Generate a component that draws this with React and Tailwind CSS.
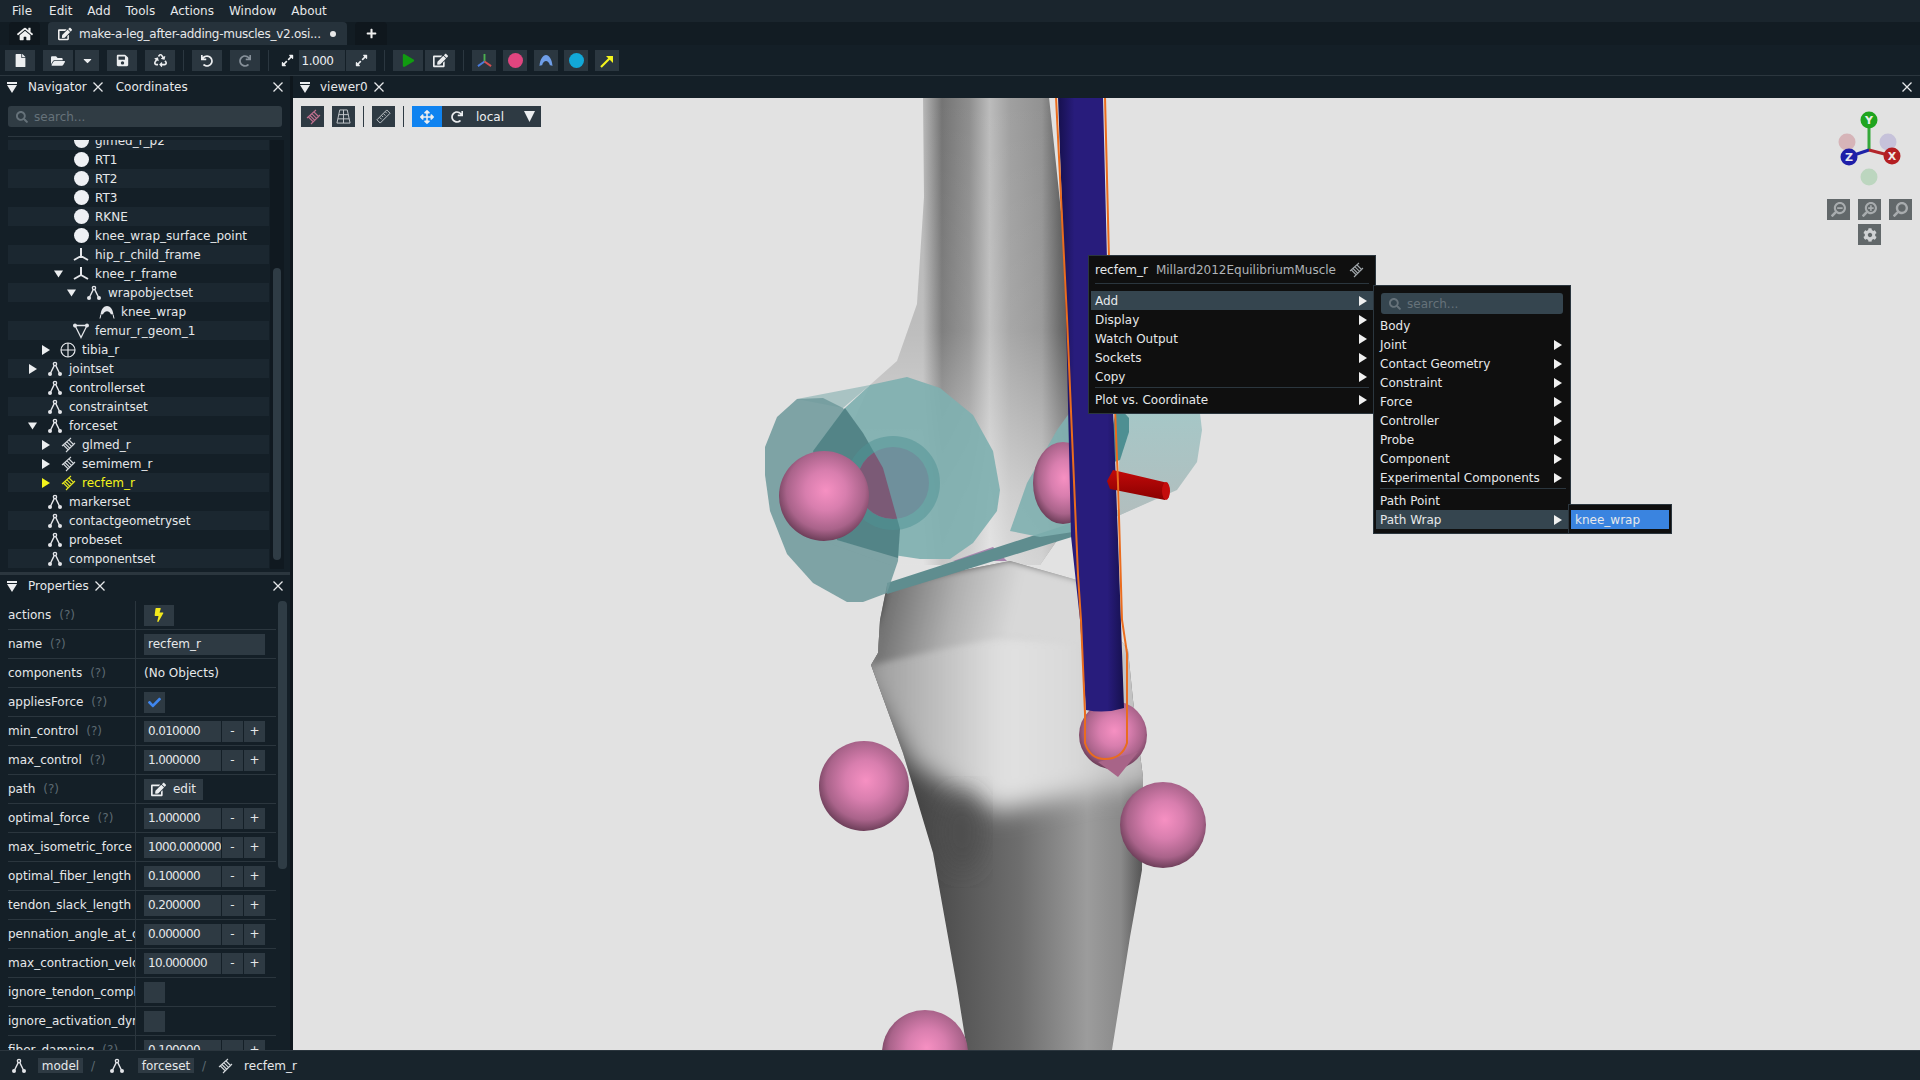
import React from 'react';
import {
  FaHome, FaEdit, FaPlus, FaFile, FaFolderOpen, FaCaretDown, FaSave, FaRecycle, FaUndo, FaRedo,
  FaExpandAlt, FaPlay, FaSearch, FaBolt, FaCheck, FaCog, FaSearchPlus, FaSearchMinus, FaArrowsAlt,
} from 'react-icons/fa';

// OpenSim style icons that the icon packs don't have
function SetIcon({ className = 'text-[#e4e6ea]' }) {
  return (
    <svg viewBox="0 0 16 16" className={`w-[16px] h-[16px] ${className}`} fill="none" stroke="currentColor" strokeWidth="1.4">
      <circle cx="8" cy="3" r="1.6" />
      <path d="M7.2 4.6 3.6 12M8.8 4.6l3.6 7.4" />
      <circle cx="3" cy="13" r="2" fill="currentColor" stroke="none" />
      <circle cx="13" cy="13" r="2" fill="currentColor" stroke="none" />
    </svg>
  );
}

function FrameIcon({ className = 'text-[#e4e6ea]' }) {
  return (
    <svg viewBox="0 0 16 16" className={`w-[16px] h-[16px] ${className}`} fill="none" stroke="currentColor" strokeWidth="2">
      <path d="M8 1v8M8 9l-7 4M8 9l7 4" />
    </svg>
  );
}

function MuscleIcon({ className = 'text-[#d4d8dc]' }) {
  return (
    <svg viewBox="0 0 16 16" className={`w-[16px] h-[16px] ${className}`} fill="none" stroke="currentColor" strokeWidth="1.1">
      <path d="M2 9 11 1M6 15l9-9M5 6.500l5 5M7 4.800l5 5M3.400 8l5 5M9 3l5 5" />
    </svg>
  );
}

function WrapIcon() {
  return (
    <svg viewBox="0 0 16 16" className="w-[16px] h-[16px] text-[#e4e6ea]" fill="currentColor">
      <path d="M1.500 11C2 5 5 2 8 2s6 3 6.500 9c-1-.6-1.800-.8-2.500-.6C11 8 9.500 7.200 8 7.200S5 8 3.900 10.400C3.200 10.200 2.500 10.400 1.500 11z" />
      <path d="M1.800 11 1 14.500M14.200 11l.8 3.500" stroke="currentColor" strokeWidth="1" />
    </svg>
  );
}

function MeshIcon() {
  return (
    <svg viewBox="0 0 16 16" className="w-[16px] h-[16px] text-[#e4e6ea]" fill="none" stroke="currentColor" strokeWidth="1.300">
      <path d="M2 2.500h12L8 14.500z" />
      <circle cx="2" cy="2.500" r="1.300" fill="currentColor" />
      <circle cx="14" cy="2.500" r="1.300" fill="currentColor" />
    </svg>
  );
}

function BodyIcon() {
  return (
    <svg viewBox="0 0 16 16" className="w-[16px] h-[16px] text-[#e4e6ea]" fill="none" stroke="currentColor" strokeWidth="1.200">
      <circle cx="8" cy="8" r="7" />
      <path d="M1 8h14M8 1v14" />
    </svg>
  );
}

function StationIcon() {
  return <div className="w-[15px] h-[15px] rounded-full bg-[#eef0f4]" />;
}

function CloseX({ className = '' }) {
  return (
    <svg viewBox="0 0 10 10" className={`w-[10px] h-[10px] text-[#e6e8ea] ${className}`} fill="none" stroke="currentColor" strokeWidth="1.300">
      <path d="M.5.5l9 9M9.500.5l-9 9" />
    </svg>
  );
}

function TriRight({ className = 'text-[#eceef0]' }) {
  return (
    <svg viewBox="0 0 8 10" className={`w-[8px] h-[10px] ${className}`} fill="currentColor">
      <path d="M0 0l8 5-8 5z" />
    </svg>
  );
}

function TriDown({ className = 'text-[#eceef0]' }) {
  return (
    <svg viewBox="0 0 10 8" className={`w-[9px] h-[8px] ${className}`} fill="currentColor">
      <path d="M0 0h10L5 8z" />
    </svg>
  );
}

function PanelMenuIcon() {
  return (
    <svg viewBox="0 0 10 11" className="w-[10px] h-[11px] text-[#eceef0]" fill="currentColor">
      <path d="M0 0h10v2H0zM0 3h10L5 11z" />
    </svg>
  );
}

const treeRows = [
  { label: 'glmed_r_p2', level: 2, icon: 'station' },
  { label: 'RT1', level: 2, icon: 'station' },
  { label: 'RT2', level: 2, icon: 'station' },
  { label: 'RT3', level: 2, icon: 'station' },
  { label: 'RKNE', level: 2, icon: 'station' },
  { label: 'knee_wrap_surface_point', level: 2, icon: 'station' },
  { label: 'hip_r_child_frame', level: 2, icon: 'frame' },
  { label: 'knee_r_frame', level: 2, icon: 'frame', arrow: 'down' },
  { label: 'wrapobjectset', level: 3, icon: 'set', arrow: 'down' },
  { label: 'knee_wrap', level: 4, icon: 'wrap' },
  { label: 'femur_r_geom_1', level: 2, icon: 'mesh' },
  { label: 'tibia_r', level: 1, icon: 'body', arrow: 'right' },
  { label: 'jointset', level: 0, icon: 'set', arrow: 'right' },
  { label: 'controllerset', level: 0, icon: 'set' },
  { label: 'constraintset', level: 0, icon: 'set' },
  { label: 'forceset', level: 0, icon: 'set', arrow: 'down' },
  { label: 'glmed_r', level: 1, icon: 'muscle', arrow: 'right' },
  { label: 'semimem_r', level: 1, icon: 'muscle', arrow: 'right' },
  { label: 'recfem_r', level: 1, icon: 'muscle', arrow: 'right', selected: true },
  { label: 'markerset', level: 0, icon: 'set' },
  { label: 'contactgeometryset', level: 0, icon: 'set' },
  { label: 'probeset', level: 0, icon: 'set' },
  { label: 'componentset', level: 0, icon: 'set' },
];

function TreeIcon({ kind, selected }) {
  if (kind === 'station') return <StationIcon />;
  if (kind === 'frame') return <FrameIcon />;
  if (kind === 'set') return <SetIcon />;
  if (kind === 'wrap') return <WrapIcon />;
  if (kind === 'mesh') return <MeshIcon />;
  if (kind === 'body') return <BodyIcon />;
  return <MuscleIcon className={selected ? 'text-[#e6e61e]' : 'text-[#d4d8dc]'} />;
}

function TreeRow({ row, index }) {
  const color = row.selected ? 'text-[#f4f41c]' : 'text-[#e6e8ea]';
  return (
    <div
      className={`h-[19px] flex items-center ${index % 2 === 0 ? 'bg-[#1b2730]' : ''} ${color}`}
      style={{ paddingLeft: row.level * 13 + 20 }}
    >
      <div className="w-[9px] flex justify-center">
        {row.arrow === 'down' && <TriDown />}
        {row.arrow === 'right' && <TriRight className={row.selected ? 'text-[#f4f41c]' : 'text-[#eceef0]'} />}
      </div>
      <div className="w-[16px] ml-[10px] flex justify-center">
        <TreeIcon kind={row.icon} selected={row.selected} />
      </div>
      <span className="ml-[6px] whitespace-nowrap">{row.label}</span>
    </div>
  );
}

const propRows = [
  { label: 'actions', type: 'actions' },
  { label: 'name', type: 'text', value: 'recfem_r' },
  { label: 'components', type: 'none' },
  { label: 'appliesForce', type: 'check', checked: true },
  { label: 'min_control', type: 'num', value: '0.010000' },
  { label: 'max_control', type: 'num', value: '1.000000' },
  { label: 'path', type: 'edit' },
  { label: 'optimal_force', type: 'num', value: '1.000000' },
  { label: 'max_isometric_force', type: 'num', value: '1000.000000' },
  { label: 'optimal_fiber_length', type: 'num', value: '0.100000' },
  { label: 'tendon_slack_length', type: 'num', value: '0.200000' },
  { label: 'pennation_angle_at_optimal', type: 'num', value: '0.000000' },
  { label: 'max_contraction_velocity', type: 'num', value: '10.000000' },
  { label: 'ignore_tendon_compliance', type: 'check' },
  { label: 'ignore_activation_dynamics', type: 'check' },
  { label: 'fiber_damping', type: 'num', value: '0.100000' },
];

function PropValue({ row }) {
  if (row.type === 'actions') {
    return (
      <div className="w-[30px] h-[21px] bg-[#2e3a43] flex items-center justify-center">
        <FaBolt className="text-[#f2e81c] text-[14px]" />
      </div>
    );
  }
  if (row.type === 'text') {
    return <div className="w-[121px] h-[21px] bg-[#2e3a43] pl-[4px] flex items-center">{row.value}</div>;
  }
  if (row.type === 'none') return <span>(No Objects)</span>;
  if (row.type === 'check') {
    return (
      <div className="w-[21px] h-[21px] bg-[#2e3a43] flex items-center justify-center">
        {row.checked && <FaCheck className="text-[#3f86ee] text-[13px]" />}
      </div>
    );
  }
  if (row.type === 'edit') {
    return (
      <div className="w-[59px] h-[21px] bg-[#2e3a43] flex items-center justify-center gap-[7px]">
        <FaEdit className="text-[15px] text-[#eceef0]" />
        <span>edit</span>
      </div>
    );
  }
  return (
    <div className="flex h-[21px] gap-[1px]">
      <div className="w-[77px] bg-[#2e3a43] pl-[4px] flex items-center overflow-hidden whitespace-nowrap tracking-[-0.65px]">{row.value}</div>
      <div className="w-[21px] bg-[#2e3a43] flex items-center justify-center">-</div>
      <div className="w-[21px] bg-[#2e3a43] flex items-center justify-center">+</div>
    </div>
  );
}

function PropRow({ row }) {
  return (
    <div className="h-[29px] shrink-0 flex items-center border-b border-[#2b363e]">
      <div className="w-[128px] h-full flex items-center overflow-hidden whitespace-nowrap border-r border-[#2b363e]">
        <span>{row.label}</span>
        <span className="ml-[8px] text-[#5d6a72]">(?)</span>
      </div>
      <div className="pl-[8px]">
        <PropValue row={row} />
      </div>
    </div>
  );
}

function ToolBtn({ children, className = 'w-[30px]' }) {
  return <div className={`h-[21px] bg-[#2b3740] flex items-center justify-center text-[#eceef0] ${className}`}>{children}</div>;
}

function ToolSep() {
  return <div className="w-[1px] h-[21px] bg-[#2b3740] mx-[8px]" />;
}

function MenuRow({ label, hot, arrow = true, className = 'pr-[6px]' }) {
  return (
    <div className={`h-[19px] flex items-center justify-between pl-[4px] ${hot ? 'bg-[#35454f]' : ''} ${className}`}>
      <span className="whitespace-nowrap">{label}</span>
      {arrow && <TriRight className="text-[#f0f0f0]" />}
    </div>
  );
}

const LEFT_DISC = 'M765 447 777 417 797 399 823 398 843 408 863 433 883 468 900 529 898 561 887 593 863 602 847 602 813 583 787 554 770 511 765 475z';
const TIBIA = 'M887 585 1010 561 1077 580 1128 650 1133 700 1143 777 1142 870 1130 937 1112 1050H967L957 987 933 853 903 753 871 665 878 653 880 620z';
const FEMUR = 'M923 97 924 197 917 304 897 361 870 385 840 450 820 540 890 565H1040L1085 500 1067 269 1049 97z';

function Scene() {
  return (
    <svg viewBox="293 98 1627 952" className="block w-full h-full" preserveAspectRatio="none">
      <defs>
        <linearGradient id="femurShade" gradientUnits="userSpaceOnUse" x1="923" y1="0" x2="1068" y2="0">
          <stop offset="0" stopColor="#b8b8b8" />
          <stop offset="0.13" stopColor="#747474" />
          <stop offset="0.32" stopColor="#8e8e8e" />
          <stop offset="0.46" stopColor="#bcbcbc" />
          <stop offset="0.6" stopColor="#a0a0a0" />
          <stop offset="0.82" stopColor="#929292" />
          <stop offset="0.94" stopColor="#626262" />
          <stop offset="1" stopColor="#4e4e4e" />
        </linearGradient>
        <linearGradient id="femurFade" x1="0" y1="0" x2="0" y2="1">
          <stop offset="0" stopColor="#ffffff" stopOpacity="0" />
          <stop offset="0.5" stopColor="#ffffff" stopOpacity="0.08" />
          <stop offset="0.85" stopColor="#ffffff" stopOpacity="0.5" />
          <stop offset="1" stopColor="#ffffff" stopOpacity="0.6" />
        </linearGradient>
        <linearGradient id="tibiaLow" gradientUnits="userSpaceOnUse" x1="900" y1="0" x2="1140" y2="0">
          <stop offset="0" stopColor="#3e3e3e" />
          <stop offset="0.25" stopColor="#565656" />
          <stop offset="0.5" stopColor="#6e6e6e" />
          <stop offset="0.78" stopColor="#9c9c9c" />
          <stop offset="0.92" stopColor="#8a8a8a" />
          <stop offset="1" stopColor="#5a5a5a" />
        </linearGradient>
        <linearGradient id="tibiaTop" gradientUnits="userSpaceOnUse" x1="880" y1="0" x2="1130" y2="0">
          <stop offset="0" stopColor="#a0a0a0" />
          <stop offset="0.5" stopColor="#e2e2e2" />
          <stop offset="0.8" stopColor="#d8d8d8" />
          <stop offset="1" stopColor="#c0c0c0" />
        </linearGradient>
        <linearGradient id="tibiaHead" gradientUnits="userSpaceOnUse" x1="880" y1="600" x2="1010" y2="630">
          <stop offset="0" stopColor="#6a6a6a" />
          <stop offset="0.55" stopColor="#b0b0b0" />
          <stop offset="1" stopColor="#d8d8d8" />
        </linearGradient>
        <radialGradient id="pink" cx="0.52" cy="0.44" r="0.56">
          <stop offset="0" stopColor="#f690c2" />
          <stop offset="0.4" stopColor="#d87eae" />
          <stop offset="0.78" stopColor="#a9638a" />
          <stop offset="1" stopColor="#6e3f5a" />
        </radialGradient>
        <linearGradient id="muscle" x1="0" y1="0" x2="1" y2="0">
          <stop offset="0" stopColor="#16104e" />
          <stop offset="0.25" stopColor="#281c7c" />
          <stop offset="0.75" stopColor="#281c7c" />
          <stop offset="1" stopColor="#16104e" />
        </linearGradient>
        <linearGradient id="rightTeal" x1="0" y1="0" x2="0" y2="1">
          <stop offset="0" stopColor="#a2caca" />
          <stop offset="1" stopColor="#b2bebe" />
        </linearGradient>
        <linearGradient id="red" x1="0" y1="0" x2="0" y2="1">
          <stop offset="0" stopColor="#c20a0a" />
          <stop offset="1" stopColor="#8a0000" />
        </linearGradient>
        <filter id="soft" x="-20%" y="-20%" width="140%" height="140%">
          <feGaussianBlur stdDeviation="12" />
        </filter>
        <filter id="softer" x="-20%" y="-20%" width="140%" height="140%">
          <feGaussianBlur stdDeviation="3" />
        </filter>
        <clipPath id="tibiaClip">
          <path d={TIBIA} />
        </clipPath>
        <clipPath id="leftDisc">
          <path d={LEFT_DISC} />
        </clipPath>
      </defs>

      {/* femur */}
      <path d={FEMUR} fill="url(#femurShade)" />
      <path d={FEMUR} fill="url(#femurFade)" />

      {/* tibia */}
      <g clipPath="url(#tibiaClip)">
        <rect x="860" y="560" width="300" height="500" fill="url(#tibiaLow)" />
        <path d="M855 670 885 620H1160V790L1097 790 997 812 913 765z" fill="url(#tibiaTop)" filter="url(#soft)" />
        <path d="M871 665 880 620 887 585 1010 561 1077 580 1128 650 1040 640 1000 636z" fill="url(#tibiaHead)" filter="url(#softer)" />
        <ellipse cx="962" cy="832" rx="22" ry="40" fill="#484848" fillOpacity="0.6" filter="url(#soft)" />
      </g>

      {/* wrap cylinders */}
      <path d="M953 561 993 547 1007 561z" fill="#a884ae" />
      <path d="M887 583 1075 522 1075 536 887 594z" fill="#5f8d8f" />
      <path d="M1075 522 1153 500 1120 515 1075 536z" fill="#b0c4c4" />
      <path d="M797 399 870 385 843 408z" fill="#a9c3c3" />
      <path d={LEFT_DISC} fill="#6f9a9c" fillOpacity="0.88" />
      <path d="M813 451 845 408 870 385 907 377 940 388 973 415 993 451 1000 490 997 511 973 543 950 559 920 559 887 554 837 540z" fill="#7fb0b0" fillOpacity="0.92" />
      <path d="M813 451 845 408 863 433 883 468 900 529 898 558 837 540z" fill="#4f7f83" fillOpacity="0.9" />
      <circle cx="893" cy="483" r="47" fill="#4d9194" fillOpacity="0.5" />
      <circle cx="893" cy="483" r="36" fill="#6f909c" />
      <g clipPath="url(#leftDisc)">
        <circle cx="893" cy="483" r="36" fill="#7b5a76" />
      </g>
      <circle cx="824" cy="496" r="45" fill="url(#pink)" />

      {/* right side of the wrap */}
      <path d="M1117 380H1196L1202 430 1197 462 1177 490 1120 515z" fill="url(#rightTeal)" />
      <path d="M1117 405 1129 418V432L1120 460 1105 465z" fill="#4e8f92" />
      <path d="M1027 483 1057 430 1073 408V532L1040 537 1010 531z" fill="#7fb0b0" fillOpacity="0.9" />
      <ellipse cx="1063" cy="483" rx="30" ry="41" fill="url(#pink)" />

      {/* muscle */}
      <circle cx="1113" cy="735" r="34" fill="url(#pink)" />
      <path d="M1098 762 1118 777 1138 752z" fill="#a86488" />
      <path d="M1058 97H1103L1107 259 1116 483 1124 708Q1105 714 1086 710L1080 620 1071 536 1066 318z" fill="url(#muscle)" />
      <path d="M1107 481 1113 470 1168 483 1165 500 1110 489z" fill="url(#red)" />
      <ellipse cx="1166" cy="491" rx="4" ry="9" fill="#c40c0c" />
      <path d="M1056 97 1067 318 1078 575 1081 620 1085 713V743Q1090 759 1105 759 1122 759 1127 743V653L1122 620 1118 483 1109 259 1105 97" fill="none" stroke="#ea6c1e" strokeWidth="2" />

      {/* loose markers */}
      <circle cx="864" cy="786" r="45" fill="url(#pink)" />
      <circle cx="1163" cy="825" r="43" fill="url(#pink)" />
      <circle cx="925" cy="1053" r="43" fill="url(#pink)" />
    </svg>
  );
}

function Gizmo() {
  return (
    <svg viewBox="0 0 80 100" className="w-[80px] h-[100px]">
      <circle cx="18" cy="42" r="8.500" fill="#d6b4b8" />
      <circle cx="59" cy="42" r="8.500" fill="#c6c2da" />
      <circle cx="40" cy="77" r="8.500" fill="#bcd6bf" />
      <path d="M40 50V15" stroke="#35a83a" strokeWidth="3" />
      <path d="M40 50 19 57" stroke="#1e22a8" strokeWidth="3" />
      <path d="M40 50 63 56" stroke="#b3252b" strokeWidth="3" />
      <circle cx="40" cy="20" r="8.500" fill="#1fa51f" />
      <circle cx="63" cy="56" r="8.500" fill="#b41e22" />
      <circle cx="20" cy="57" r="8.500" fill="#1e1ea8" />
      <text x="40" y="24" textAnchor="middle" fontSize="11" fontWeight="700" fill="#e8f0e8">Y</text>
      <text x="63" y="60" textAnchor="middle" fontSize="11" fontWeight="700" fill="#f0e8e8">X</text>
      <text x="20" y="61" textAnchor="middle" fontSize="11" fontWeight="700" fill="#e8e8f0">Z</text>
    </svg>
  );
}

export default function App() {
  return (
    <div className="w-[1920px] h-screen flex flex-col overflow-hidden bg-[#141f27] text-[#e6e8ea] text-[12px] font-['DejaVu_Sans',sans-serif]">
      {/* MENU BAR */}
      <div className="h-[22px] shrink-0 bg-[#1a252d] flex items-center pl-[12px] gap-[15px]">
        <span className="mr-[2px]">File</span>
        {['Edit', 'Add', 'Tools', 'Actions', 'Window', 'About'].map((m) => (
          <span key={m}>{m}</span>
        ))}
      </div>

      {/* TABS */}
      <div className="h-[23px] shrink-0 bg-[#121c23] flex items-end pl-[9px]">
        <div className="w-[31px] h-[23px] bg-[#0f171d] rounded-t flex items-center justify-center">
          <FaHome className="text-[16px] text-[#f0f0f0]" />
        </div>
        <div className="w-[299px] h-[23px] ml-[8px] bg-[#26323b] rounded-t flex items-center pl-[10px]">
          <FaEdit className="text-[14px] text-[#f0f0f0]" />
          <span className="ml-[7px] whitespace-nowrap tracking-[-0.27px]">make-a-leg_after-adding-muscles_v2.osi...</span>
          <span className="ml-[9px] w-[6px] h-[6px] rounded-full bg-[#e8e8e8]" />
        </div>
        <div className="w-[32px] h-[23px] ml-[8px] bg-[#0f171d] rounded-t flex items-center justify-center">
          <FaPlus className="text-[11px] text-[#f0f0f0]" />
        </div>
      </div>

      {/* TOOLBAR */}
      <div className="h-[31px] shrink-0 bg-[#141f27] flex items-center pl-[5px] pt-[1px] border-b border-[#2b363e]">
        <ToolBtn><FaFile className="text-[13px]" /></ToolBtn>
        <ToolBtn className="w-[30px] ml-[8px]"><FaFolderOpen className="text-[14px]" /></ToolBtn>
        <ToolBtn className="w-[24px] ml-[2px]"><FaCaretDown className="text-[13px]" /></ToolBtn>
        <ToolBtn className="w-[30px] ml-[8px]"><FaSave className="text-[13px]" /></ToolBtn>
        <ToolBtn className="w-[30px] ml-[8px]"><FaRecycle className="text-[13px]" /></ToolBtn>
        <ToolSep />
        <ToolBtn><FaUndo className="text-[12px]" /></ToolBtn>
        <ToolBtn className="w-[30px] ml-[8px]"><FaRedo className="text-[12px] text-[#87919a]" /></ToolBtn>
        <ToolSep />
        <ToolBtn className="w-[21px] bg-transparent"><FaExpandAlt className="text-[13px]" /></ToolBtn>
        <ToolBtn className="w-[46px] ml-[1px] tracking-[-0.5px]"><span className="mr-[9px]">1.000</span></ToolBtn>
        <ToolBtn className="w-[30px] ml-[1px]"><FaExpandAlt className="text-[13px]" /></ToolBtn>
        <ToolSep />
        <ToolBtn><FaPlay className="text-[13px] text-[#119c11]" /></ToolBtn>
        <ToolBtn className="w-[30px] ml-[2px]"><FaEdit className="text-[15px]" /></ToolBtn>
        <ToolSep />
        <ToolBtn className="w-[24px]">
          <svg viewBox="0 0 16 16" className="w-[15px] h-[15px]" fill="none" strokeWidth="2">
            <path d="M8 9V1" stroke="#4caf50" />
            <path d="M8 9l-7 5" stroke="#4a7ddc" />
            <path d="M8 9l7 5" stroke="#d85050" />
          </svg>
        </ToolBtn>
        <ToolBtn className="w-[24px] ml-[7px]"><div className="w-[15px] h-[15px] rounded-full bg-[#e0457f]" /></ToolBtn>
        <ToolBtn className="w-[24px] ml-[7px]">
          <svg viewBox="0 0 16 16" className="w-[16px] h-[16px]" fill="#6f9ee8">
            <path d="M1.500 13C2 6 5 2 8 2s6 4 6.500 11c-1-.6-1.800-.8-2.500-.6C11 9 9.500 8 8 8s-3 1-4 4.400c-.7-.2-1.500 0-2.500.6z" />
          </svg>
        </ToolBtn>
        <ToolBtn className="w-[24px] ml-[6px]"><div className="w-[15px] h-[15px] rounded-full bg-[#12a8d8]" /></ToolBtn>
        <ToolBtn className="w-[24px] ml-[7px]">
          <svg viewBox="0 0 16 16" className="w-[16px] h-[16px]" fill="none" stroke="#f4f41c" strokeWidth="2.200">
            <path d="M2 14 12 4" />
            <path d="M7 3h7v7z" fill="#f4f41c" stroke="none" />
          </svg>
        </ToolBtn>
      </div>

      <div className="flex-1 min-h-0 flex">
        {/* LEFT PANELS */}
        <div className="w-[290px] shrink-0 flex flex-col">
          {/* NAVIGATOR */}
          <div className="h-[22px] shrink-0 flex items-center pl-[7px]">
            <PanelMenuIcon />
            <span className="ml-[11px]">Navigator</span>
            <CloseX className="ml-[6px]" />
            <span className="ml-[13px]">Coordinates</span>
            <CloseX className="ml-auto mr-[7px]" />
          </div>
          <div className="h-[21px] shrink-0 mx-[8px] mt-[8px] rounded-[3px] bg-[#303c44] flex items-center pl-[8px] text-[#66727a]">
            <FaSearch className="text-[12px]" />
            <span className="ml-[6px]">search...</span>
          </div>
          <div className="h-[1px] shrink-0 mx-[8px] mt-[9px] bg-[#2b363e]" />
          <div className="h-[429px] shrink-0 mt-[3px] flex overflow-hidden">
            <div className="w-[261px] ml-[8px] overflow-hidden">
              <div className="-mt-[9px]">
                {treeRows.map((row, i) => (
                  <TreeRow key={row.label} row={row} index={i} />
                ))}
              </div>
            </div>
            <div className="w-[14px] ml-[1px] bg-[#101920] flex justify-center">
              <div className="w-[8px] h-[292px] mt-[128px] rounded bg-[#2f3c45]" />
            </div>
          </div>

          {/* PROPERTIES */}
          <div className="h-[3px] shrink-0 mt-[3px] bg-[#2b363e]" />
          <div className="h-[22px] shrink-0 flex items-center pl-[7px]">
            <PanelMenuIcon />
            <span className="ml-[11px]">Properties</span>
            <CloseX className="ml-[6px]" />
            <CloseX className="ml-auto mr-[7px]" />
          </div>
          <div className="flex-1 min-h-0 flex overflow-hidden pt-[4px]">
            <div className="w-[268px] ml-[8px] flex flex-col overflow-hidden">
              {propRows.map((row) => (
                <PropRow key={row.label} row={row} />
              ))}
            </div>
            <div className="w-[9px] h-[268px] ml-[2px] rounded bg-[#2f3c45]" />
          </div>
        </div>

        <div className="w-[3px] shrink-0 bg-[#0e161c]" />

        {/* VIEWER */}
        <div className="flex-1 min-w-0 flex flex-col">
          <div className="h-[22px] shrink-0 flex items-center pl-[7px]">
            <PanelMenuIcon />
            <span className="ml-[10px]">viewer0</span>
            <CloseX className="ml-[6px]" />
            <CloseX className="ml-auto mr-[8px]" />
          </div>
          <div className="flex-1 min-h-0 relative bg-[#e2e2e2]">
            <Scene />

            {/* viewer toolbar */}
            <div className="absolute left-[8px] top-[8px] flex items-center h-[21px] text-[#eceef0]">
              <div className="w-[23px] h-[21px] bg-[#2e3a43] flex items-center justify-center">
                <MuscleIcon className="text-[#c0708f]" />
              </div>
              <div className="w-[23px] h-[21px] ml-[8px] bg-[#2e3a43] flex items-center justify-center">
                <svg viewBox="0 0 16 16" className="w-[15px] h-[15px]" fill="none" stroke="#c8ccd0" strokeWidth="1">
                  <path d="M4 1h8l3 14H1zM8 1v14M3 6h10M2 10.500h12" />
                </svg>
              </div>
              <div className="w-[1px] h-[21px] mx-[8px] bg-[#2e3a43]" />
              <div className="w-[23px] h-[21px] bg-[#2e3a43] flex items-center justify-center">
                <svg viewBox="0 0 16 16" className="w-[15px] h-[15px]" fill="none" stroke="#c8ccd0" strokeWidth="1">
                  <path d="M1 11.500 11.500 1 15 4.500 4.500 15zM4 9l2 2M6 7l1.500 1.500M8 5l2 2M10 3l1.500 1.500" />
                </svg>
              </div>
              <div className="w-[1px] h-[21px] mx-[8px] bg-[#2e3a43]" />
              <div className="w-[30px] h-[21px] bg-[#0f83f0] flex items-center justify-center">
                <FaArrowsAlt className="text-[14px]" />
              </div>
              <div className="w-[99px] h-[21px] bg-[#2e3a43] flex items-center pl-[9px]">
                <FaRedo className="text-[12px]" />
                <span className="ml-[13px]">local</span>
                <svg viewBox="0 0 10 10" className="ml-auto mr-[6px] w-[11px] h-[11px] text-[#eceef0]" fill="currentColor">
                  <path d="M0 0h10L5 10z" />
                </svg>
              </div>
            </div>

            {/* axis gizmo and camera buttons */}
            <div className="absolute left-[1536px] top-[2px]">
              <Gizmo />
            </div>
            <div className="absolute left-[1534px] top-[101px] flex gap-[8px]">
              <div className="w-[23px] h-[21px] bg-[#62686a] flex items-center justify-center">
                <FaSearchMinus className="text-[15px] text-[#a8acae] -scale-x-100" />
              </div>
              <div className="w-[23px] h-[21px] bg-[#62686a] flex items-center justify-center">
                <FaSearchPlus className="text-[15px] text-[#a8acae] -scale-x-100" />
              </div>
              <div className="w-[23px] h-[21px] bg-[#62686a] flex items-center justify-center">
                <FaSearch className="text-[15px] text-[#a8acae] -scale-x-100" />
              </div>
            </div>
            <div className="absolute left-[1565px] top-[126px] w-[23px] h-[21px] bg-[#62686a] flex items-center justify-center">
              <FaCog className="text-[14px] text-[#d0d2d4]" />
            </div>

            {/* context menu */}
            <div className="absolute left-[795px] top-[157px] w-[288px] h-[159px] bg-[#0f0f0f] border border-[#2b363e] px-[2px]">
              <div className="h-[27px] flex items-center pl-[4px] pr-[9px]">
                <span>recfem_r</span>
                <span className="ml-[8px] text-[#b0b4b8] whitespace-nowrap">Millard2012EquilibriumMuscle</span>
                <MuscleIcon className="ml-auto text-[#a0a6aa]" />
              </div>
              <div className="h-[1px] mx-[4px] bg-[#2b363e]" />
              <div className="mt-[7px]">
                <MenuRow label="Add" hot />
                <MenuRow label="Display" />
                <MenuRow label="Watch Output" />
                <MenuRow label="Sockets" />
                <MenuRow label="Copy" />
              </div>
              <div className="h-[1px] mx-[4px] my-[1px] bg-[#2b363e]" />
              <MenuRow label="Plot vs. Coordinate" className="pr-[6px] mt-[2px]" />
            </div>
            <div className="absolute left-[1080px] top-[187px] w-[198px] h-[249px] bg-[#0f0f0f] border border-[#2b363e] pl-[2px]">
              <div className="h-[21px] mt-[7px] mr-[7px] ml-[5px] rounded-[3px] bg-[#35454f] flex items-center pl-[8px] text-[#66727a]">
                <FaSearch className="text-[12px]" />
                <span className="ml-[6px]">search...</span>
              </div>
              <div className="mt-[2px]">
                <MenuRow label="Body" arrow={false} className="pr-[8px]" />
                <MenuRow label="Joint" className="pr-[8px]" />
                <MenuRow label="Contact Geometry" className="pr-[8px]" />
                <MenuRow label="Constraint" className="pr-[8px]" />
                <MenuRow label="Force" className="pr-[8px]" />
                <MenuRow label="Controller" className="pr-[8px]" />
                <MenuRow label="Probe" className="pr-[8px]" />
                <MenuRow label="Component" className="pr-[8px]" />
                <MenuRow label="Experimental Components" className="pr-[8px]" />
              </div>
              <div className="h-[1px] mx-[4px] mt-[1px] mb-[2px] bg-[#2b363e]" />
              <MenuRow label="Path Point" arrow={false} className="pr-[8px]" />
              <MenuRow label="Path Wrap" hot className="pr-[8px]" />
            </div>
            <div className="absolute left-[1275px] top-[406px] w-[104px] h-[30px] bg-[#0f0f0f] border border-[#2b363e] px-[2px] pt-[5px]">
              <div className="h-[19px] bg-[#3a84e0] flex items-center pl-[4px]">knee_wrap</div>
            </div>
          </div>
        </div>
      </div>

      {/* STATUS BAR */}
      <div className="h-[30px] shrink-0 bg-[#18242c] border-t border-[#2b363e] flex items-center pl-[11px]">
        <SetIcon />
        <span className="ml-[11px] h-[15px] w-[45px] bg-[#2e3a43] flex items-center justify-center">model</span>
        <span className="ml-[8px] text-[#5d6a72]">/</span>
        <span className="ml-[14px]"><SetIcon /></span>
        <span className="ml-[13px] h-[15px] w-[56px] bg-[#2e3a43] flex items-center justify-center">forceset</span>
        <span className="ml-[8px] text-[#5d6a72]">/</span>
        <span className="ml-[11px]"><MuscleIcon /></span>
        <span className="ml-[11px]">recfem_r</span>
      </div>
    </div>
  );
}
